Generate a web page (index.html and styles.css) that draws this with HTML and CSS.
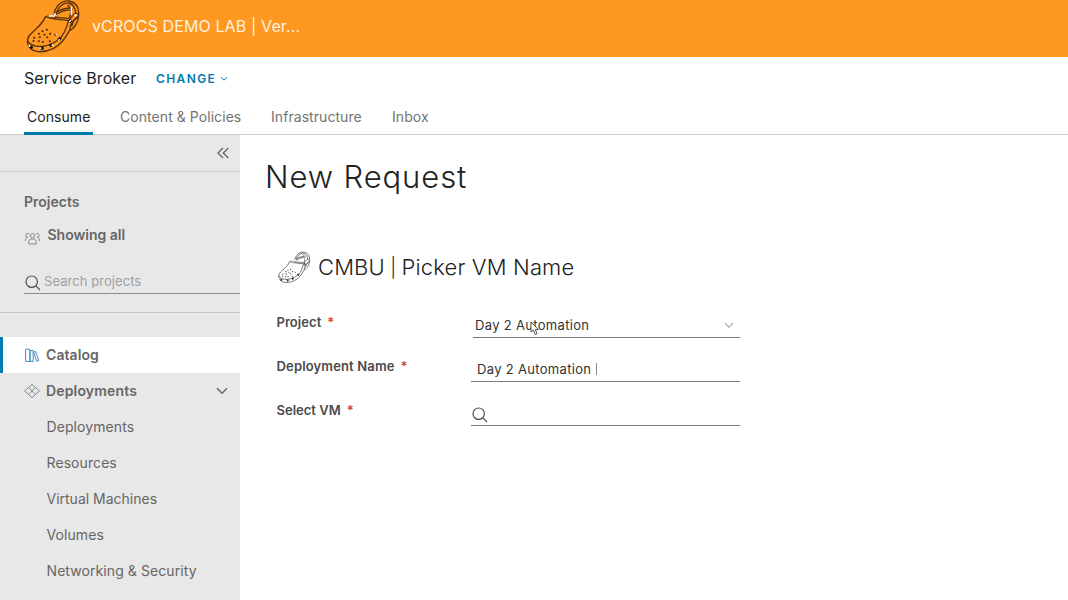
FILE: index.html
```html
<!DOCTYPE html>
<html lang="en">
<head>
<meta charset="utf-8">
<title>Service Broker</title>
<link rel="stylesheet" href="styles.css">
</head>
<body>
<svg width="0" height="0" class="defs">
  <symbol id="clog" viewBox="20 0 165 165">
    <path class="clog-body" d="M78 50C72 68 58 80 38 98C23 110 19 128 32 143C44 160 77 158 103 145C128 132 140 112 150 92C165 87 178 65 178 45C174 38 165 39 160 46L148 62C125 58 95 58 78 50Z"/>
    <g class="clog-line">
      <path d="M24 122C42 150 92 141 120 117C136 103 142 82 148 62M84 47C105 53 128 54 148 55M104 46C106 20 126 0 149 3C174 8 179 28 178 45M110 45C113 24 130 7 149 9C163 13 169 28 169 39M108 40C122 28 137 24 158 24M115 43C126 33 142 29 158 31M158 24L150 55M145 14L158 31M152 91C151 77 159 61 178 47M158 79C158 68 166 58 175 53"/>
    </g>
    <path class="clog-holes" d="M82 89h1M69 94h1M58 101h1M92 101h1M75 104h1M61 112h1M44 113h1M83 112h1M58 124h1M70 126h1M42 123h1M91 124h1M107 104h1"/>
    <path class="clog-vents" d="M31 139l9 5M62 145l11-1M91 138l8-4M117 121l7-8M150 67l6-7"/>
    <path class="clog-glints" d="M88 48h17l3-9M156 20v24M28 135l5 5M60 144l6 1M97 137l5-3M109 104l3-2M117 122l4-4M150 66l5-5M166 49l5-6"/>
  </symbol>
  <symbol id="search" viewBox="0 0 16 16"><circle cx="6.7" cy="6.7" r="5.7"/><path d="M10.9 10.9L15 15"/></symbol>
</svg>

<header class="banner">
  <svg class="banner-logo"><use href="#clog"/></svg>
  <span class="banner-title">vCROCS DEMO LAB | Ver...</span>
</header>

<div class="service">
  <span class="service-name">Service Broker</span>
  <a class="change">CHANGE</a>
  <svg class="change-caret" viewBox="0 0 8 6"><path d="M1 1.2L4 4.2L7 1.2"/></svg>
</div>

<nav class="tabs">
  <a class="tab tab-consume active">Consume</a>
  <a class="tab tab-content">Content &amp; Policies</a>
  <a class="tab tab-infra">Infrastructure</a>
  <a class="tab tab-inbox">Inbox</a>
</nav>

<div class="layout">
  <aside class="sidebar">
    <div class="collapse"><svg viewBox="0 0 12 12"><path d="M6 1L1 6L6 11M11.3 1L6.3 6L11.3 11"/></svg></div>
    <section class="projects">
      <h4>Projects</h4>
      <div class="showing">
        <svg viewBox="0 0 16 16"><circle cx="7.5" cy="5.8" r="2.1"/><path d="M3.8 14V12C3.8 10 5 9 7.5 9S11.2 10 11.2 12V14Z"/><path d="M4.5 4.5A1.9 1.9 0 1 0 3 7.2C1.4 7.5.6 8.5.6 10V11M10.5 4.5A1.9 1.9 0 1 1 12 7.2C13.6 7.5 14.4 8.5 14.4 10V11"/></svg>
        <span>Showing all</span>
      </div>
      <div class="project-search"><svg><use href="#search"/></svg><span>Search projects</span></div>
    </section>
    <ul class="menu">
      <li class="catalog"><svg viewBox="0 0 15 15"><path d="M.6 1.6Q2.8.5 5 1.6V13.4H.6ZM5 2.6H8.2V13.4H5ZM8.5 4.2L10.6 3.6L13.8 12.6L11.7 13.4Z"/></svg><b>Catalog</b></li>
      <li class="group"><svg viewBox="0 0 16 14"><path d="M4.5 3.5L8 .5L11.5 3.5L8 7ZM.5 7L4.5 3.5L8 7L4.5 10.5ZM8 7L11.5 3.5L15.5 7L11.5 10.5ZM4.5 10.5L8 7L11.5 10.5L8 13.5Z"/></svg><b>Deployments</b><svg class="open" viewBox="0 0 12 8"><path d="M1 1.3L6 6.3L11 1.3"/></svg></li>
      <li>Deployments</li>
      <li>Resources</li>
      <li class="machines">Virtual Machines</li>
      <li>Volumes</li>
      <li>Networking &amp; Security</li>
    </ul>
  </aside>
  <main class="content">
    <h1>New Request</h1>
    <div class="item"><svg><use href="#clog"/></svg><h2>CMBU <span class="bar">|</span> Picker VM Name</h2></div>
    <form class="form">
      <div class="row">
        <label class="l-project">Project<i>*</i></label>
        <div class="field select"><span>Day 2 Automation</span><svg class="caret" viewBox="0 0 10 7"><path d="M1 1L5 5.2L9 1"/></svg>
          <svg class="pointer" viewBox="0 0 10 15"><path d="M1 1V11L3.4 9L5.2 13.5L7 12.7L5.3 8.5H8.4Z"/></svg>
        </div>
      </div>
      <div class="row">
        <label class="l-name">Deployment Name<i>*</i></label>
        <div class="field input"><span>Day 2 Automation</span><span class="text-caret"></span></div>
      </div>
      <div class="row">
        <label class="l-vm">Select VM<i>*</i></label>
        <div class="field lookup"><svg><use href="#search"/></svg></div>
      </div>
    </form>
  </main>
</div>
</body>
</html>
```

FILE: styles.css
```css
* { box-sizing: border-box; }
body { margin: 0; width: 1068px; height: 600px; overflow: hidden; background: #fff; font-family: Inter, "Open Sans", sans-serif; font-size: 14px; color: #666; }
svg { display: block; fill: none; stroke: currentColor; flex: none; }
.defs { position: absolute; }
h1, h2, h4, ul { margin: 0; padding: 0; font-weight: 400; }

.clog-body { fill: var(--clog-fill); stroke: var(--clog-ink); stroke-width: 4; }
.clog-line { stroke: var(--clog-ink); stroke-width: 4; }
.clog-holes { stroke: var(--clog-ink); stroke-width: 6; stroke-linecap: round; }
.clog-vents { stroke: #181008; stroke-width: 9; }
.clog-glints { stroke: #fff; stroke-width: 4.5; }

.banner { height: 57px; display: flex; background: #ff9821; color: #fff0df; }
.banner-logo { width: 55px; height: 55px; margin-left: 26px; --clog-fill: #ff9821; --clog-ink: #5d300b; }
.banner-title { margin-left: 11px; line-height: 53px; font-size: 16px; letter-spacing: .12px; white-space: nowrap; }

.service { height: 41px; padding-left: 24px; display: flex; align-items: center; color: #222; }
.service-name { width: 132px; font-size: 16px; letter-spacing: .07px; white-space: nowrap; }
.change { width: 64px; margin-top: 2px; font-size: 12px; font-weight: 600; letter-spacing: 1.4px; color: #0079ad; }
.change-caret { width: 8px; height: 6px; margin-top: 2px; color: #0079ad; }

.tabs { height: 37px; padding-left: 24px; display: flex; border-bottom: 1px solid #ccc; color: #737373; line-height: 37px; letter-spacing: .06px; white-space: nowrap; }
.tab { height: 37px; }
.active { width: 69px; padding-left: 3px; border-bottom: 3px solid #0079ad; color: #222; }
.tab-content { width: 151px; margin-left: 27px; }
.tab-infra { width: 121px; }

.layout { display: flex; height: 465px; }
.sidebar { width: 240px; background: #e8e8e8; }
.collapse { height: 37px; border-bottom: 1px solid #ccc; display: flex; align-items: center; justify-content: flex-end; padding-right: 11px; }
.collapse svg { width: 12px; height: 12px; stroke-width: 1.3; }
.projects { height: 141px; padding: 20px 0 0 24px; border-bottom: 1px solid #c6c6c6; }
.projects h4 { font-size: 14px; line-height: 20px; font-weight: 600; }
.showing { display: flex; align-items: center; height: 20px; margin-top: 12px; font-weight: 600; }
.showing svg { width: 16px; height: 16px; margin: 7px 7px 0 .5px; stroke-width: 1; color: #888; }
.project-search { height: 25px; margin-top: 25px; display: flex; border-bottom: 1px solid #8c8c8c; font-size: 13px; line-height: 25px; letter-spacing: .06px; color: #a0a0a0; }
.project-search svg { width: 16px; height: 16px; margin: 6px 3px 0 1px; color: #505050; stroke-width: 1.2; }
.menu { margin-top: 24px; list-style: none; }
.menu li { height: 36px; padding-left: 46.5px; line-height: 36px; letter-spacing: .08px; white-space: nowrap; }
.menu .machines { letter-spacing: 0; }
.menu b { font-weight: 600; }
.menu .catalog, .menu .group { display: flex; align-items: center; padding-left: 24px; }
.menu .group { letter-spacing: .16px; }
.menu .catalog { padding-left: 22px; background: #fff; border-left: 3px solid #0079ad; }
.catalog svg { width: 15px; height: 15px; margin-right: 6px; color: #3d8fbd; }
.group svg { width: 16px; height: 14px; margin-right: 6px; color: #8c8c8c; }
.group .open { width: 12px; height: 8px; margin: 0 12px 0 auto; color: #666; stroke-width: 1.4; }

.content { width: 828px; padding: 22px 0 0 25px; color: #222; }
h1 { font-size: 31px; line-height: 40px; font-weight: 300; letter-spacing: .9px; white-space: nowrap; }
.item { display: flex; height: 38px; margin: 51px 0 0 13px; align-items: center; --clog-fill: #fff; --clog-ink: #555; }
.item svg { width: 33px; height: 34px; margin-top: 1px; }
h2 { margin-left: 7px; font-size: 22px; line-height: 38px; font-weight: 300; letter-spacing: .14px; white-space: nowrap; }
.bar { display: inline-block; margin: 0 -1px; font-size: 19px; vertical-align: 1px; }
.form { margin: 15px 0 0 11px; }
.row { display: flex; height: 44px; font-size: 13px; white-space: nowrap; }
label { width: 195px; line-height: 16px; padding: 13px 0 0 .5px; font-weight: 600; letter-spacing: .15px; color: #4a4a4a; }
label i { margin-left: 6px; font-style: normal; color: #cc4a24; }
.l-project { letter-spacing: .05px; }
.l-vm { letter-spacing: 0; }
.field { position: relative; width: 269px; height: 37px; padding-top: 12px; display: flex; border-bottom: 1px solid #7a7a7a; line-height: 24px; letter-spacing: .32px; color: #333; }
.select { width: 267px; margin-left: 2px; padding-left: 2px; }
.input { padding-left: 6px; }
.caret { width: 10px; height: 7px; margin: 9px 6px 0 auto; color: #b5b5b5; stroke-width: 1.3; }
.pointer { position: absolute; left: 57px; top: 20px; width: 10px; height: 15px; fill: #fff; color: #444; stroke-width: .9; }
.text-caret { width: 1px; height: 12px; margin: 6px 0 0 5px; background: #888; }
.lookup svg { width: 16px; height: 16px; margin: 6px 0 0 1px; color: #505050; stroke-width: 1.2; }
```
